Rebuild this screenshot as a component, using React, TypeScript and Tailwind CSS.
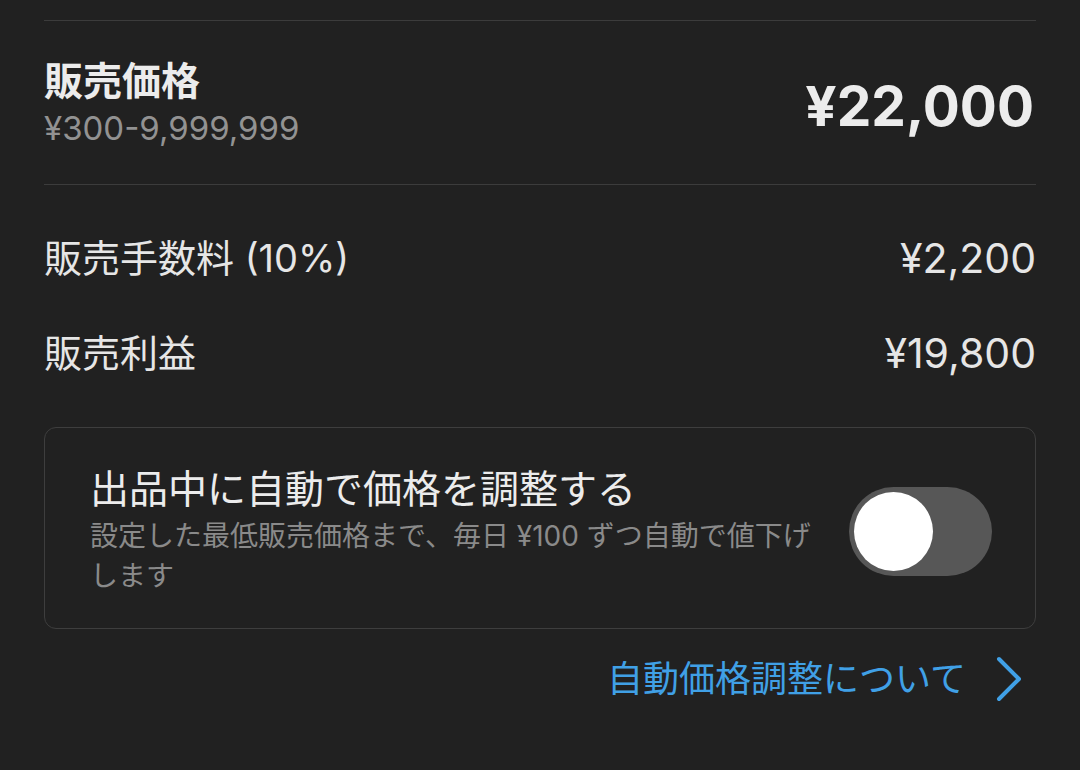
import { useState } from "react";

const font = "font-['Inter','Noto_Sans_CJK_JP',sans-serif]";

function Row({ label, value }: { label: string; value: string }) {
  return (
    <div className="flex h-[95px] items-center justify-between">
      <span className="text-[38px] leading-[44px] text-[#e6e6e6]">{label}</span>
      <span className="text-[41px] leading-[44px] text-[#e6e6e6]">{value}</span>
    </div>
  );
}

export default function App() {
  const [auto, setAuto] = useState(false);

  return (
    <div className={`min-h-[770px] w-[1080px] bg-[#212121] pt-[20px] ${font}`}>
      <div className="mx-[44px]">
        {/* Price */}
        <div className="flex items-center justify-between border-y border-[#3c3c3c] pt-[38px] pb-[31px]">
          <div>
            <div className="text-[39px] font-bold leading-[44px] text-[#ececec]">販売価格</div>
            <div className="text-[33px] leading-[50px] text-[#929292]">¥300-9,999,999</div>
          </div>
          <div className="pr-[2px] text-[55px] font-bold leading-none text-[#ececec]">¥22,000</div>
        </div>

        {/* Fee rows */}
        <div className="pt-[25px]">
          <Row label="販売手数料 (10%)" value="¥2,200" />
          <Row label="販売利益" value="¥19,800" />
        </div>

        {/* Auto price */}
        <div className="mt-[27px] flex items-center justify-between rounded-[12px] border border-[#3e3e3e] pt-[38px] pr-[43px] pb-[32px] pl-[45px]">
          <div className="w-[742px]">
            <div className="text-[39px] leading-[46px] text-[#ececec]">出品中に自動で価格を調整する</div>
            <div className="mt-[4px] text-[28px] leading-[40px] text-[#8a8a8a]">
              設定した最低販売価格まで、毎日 ¥100 ずつ自動で値下げします
            </div>
          </div>
          <button
            onClick={() => setAuto(!auto)}
            className={`flex h-[89px] w-[143px] shrink-0 items-center rounded-full p-[5px] ${
              auto ? "justify-end bg-[#34c759]" : "justify-start bg-[#575757]"
            }`}
          >
            <span className="block h-[79px] w-[79px] rounded-full bg-white" />
          </button>
        </div>

        {/* Link */}
        <div className="mt-[25px] flex h-[50px] items-center justify-end gap-[30px] pr-[14px]">
          <span className="text-[36px] leading-[44px] text-[#40a0e6]">自動価格調整について</span>
          <svg width="26" height="46" viewBox="0 0 26 46" fill="none">
            <path d="M3 3 L23 23 L3 43" stroke="#40a0e6" strokeWidth="4" strokeLinecap="round" strokeLinejoin="round" />
          </svg>
        </div>
      </div>
    </div>
  );
}
